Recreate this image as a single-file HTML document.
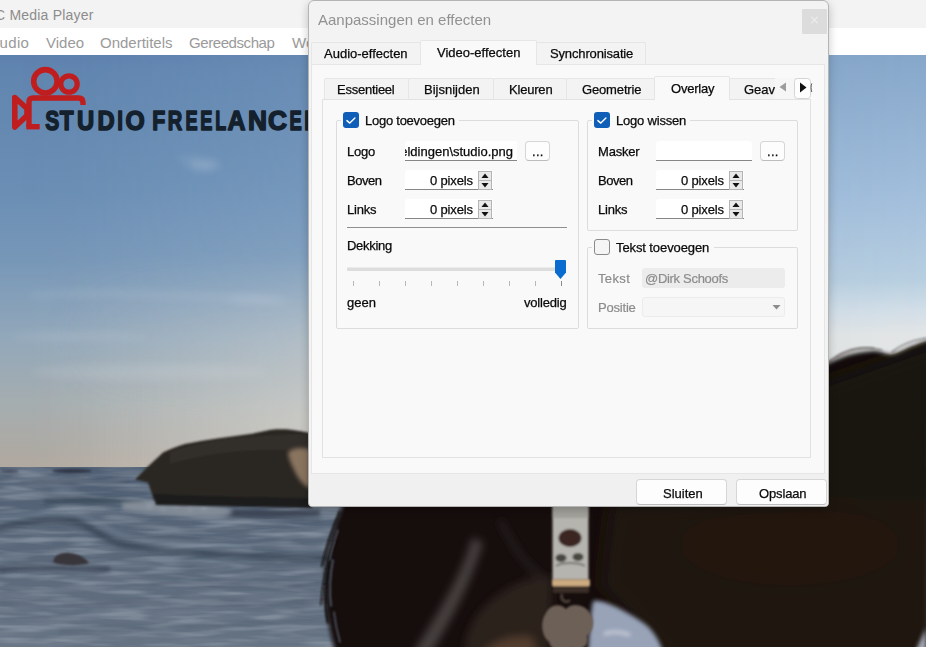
<!DOCTYPE html>
<html lang="nl">
<head>
<meta charset="utf-8">
<title>Aanpassingen en effecten</title>
<style>
*{box-sizing:border-box;margin:0;padding:0}
html,body{width:926px;height:647px;overflow:hidden;background:#fff}
body{position:relative;font-family:"Liberation Sans",sans-serif;font-size:13px;color:#111}
.abs{position:absolute}
#titlebar{left:0;top:0;width:926px;height:28px;background:#f3f3f3}
#titlebar span{position:absolute;left:-22.500px;top:7px;font-size:14px;letter-spacing:0.2px;color:#8c8c8c;white-space:nowrap;line-height:17px}
#menubar{left:0;top:28px;width:926px;height:27px;background:#fff}
#menubar span{position:absolute;top:6px;font-size:15px;color:#9a9a9a;white-space:nowrap;line-height:17px}
#video{left:0;top:55px;width:926px;height:592px;overflow:hidden;background:#7fa3cc}
#video svg{position:absolute;left:0;top:0}
/* dialog */
#dlg{left:308px;top:0px;width:521px;height:507px;background:#f3f3f3;border:1px solid #b4b4b4;border-radius:6px 6px 4px 4px;box-shadow:0 3px 10px rgba(0,0,0,.22);overflow:hidden}
#dlg .t{position:absolute;white-space:nowrap;font-size:13px;color:#0a0a0a;line-height:16px;margin-top:1px;-webkit-text-stroke:0.25px #0a0a0a}
#dtitle{font-size:15px !important;color:#919191 !important;margin-top:0 !important;-webkit-text-stroke:0 !important}
#close{background:#dcdcdc;border-radius:1px}
.tab{position:absolute;background:#f3f3f3;border:1px solid #e6e6e6;border-bottom:none;border-radius:2px 2px 0 0;text-align:center;white-space:nowrap;font-size:13px}
.tab.sel{background:#f9f9f9}
#pane1{background:#f9f9f9;border:1px solid #e6e6e6}
#w{left:-309px;top:-1px;width:926px;height:647px}
#dlg .t.dis{color:#8c8c8c;-webkit-text-stroke:0.2px #8c8c8c}
#pane2{background:#f9f9f9;border:1px solid #e2e2e2}
.grp{position:absolute;border:1px solid #dcdcdc;border-radius:2px}
.cb{position:absolute;width:15px;height:15px;border-radius:3px}
.cb.on{background:#0f5fb8}
.cb.off{background:#f5f5f5;border:1px solid #8a8a8a}
.inp{position:absolute;background:#fff;border-bottom:1px solid #868686;border-radius:3px 3px 0 0;height:21px}
.btn{position:absolute;background:#fdfdfd;border:1px solid #d6d6d6;border-bottom-color:#bdbdbd;border-radius:4px;text-align:center;font-size:13px}
</style>
</head>
<body>
<div id="titlebar" class="abs"><span>VLC Media Player</span></div>
<div id="menubar" class="abs">
<span style="left:-11px;letter-spacing:0.4px">Audio</span><span style="left:46px">Video</span><span style="left:100px">Ondertitels</span><span style="left:189px;letter-spacing:-0.42px">Gereedschap</span><span style="left:292px">Weergave</span>
</div>
<div id="video" class="abs">
<svg width="926" height="592" viewBox="0 55 926 592">
<defs>
<linearGradient id="sky" x1="0" y1="55" x2="0" y2="468" gradientUnits="userSpaceOnUse">
<stop offset="0" stop-color="#5d81ad"/>
<stop offset="0.036" stop-color="#6085af"/>
<stop offset="0.327" stop-color="#6a8eb4"/>
<stop offset="0.496" stop-color="#7797b8"/>
<stop offset="0.69" stop-color="#93a8ba"/>
<stop offset="0.847" stop-color="#a5adaf"/>
<stop offset="0.969" stop-color="#aea9a2"/>
<stop offset="1" stop-color="#b1aaa1"/>
</linearGradient>
<linearGradient id="skyR" x1="0" y1="55" x2="0" y2="468" gradientUnits="userSpaceOnUse">
<stop offset="0" stop-color="#86a7ca"/>
<stop offset="0.036" stop-color="#8aaacc"/>
<stop offset="0.35" stop-color="#a3bfdc"/>
<stop offset="0.545" stop-color="#b8cfe0"/>
<stop offset="0.617" stop-color="#d2dee8"/>
<stop offset="0.678" stop-color="#e3e6e6"/>
<stop offset="1" stop-color="#e8e6e2"/>
</linearGradient>
<linearGradient id="skym" x1="0" y1="0" x2="926" y2="0" gradientUnits="userSpaceOnUse">
<stop offset="0" stop-color="#fff" stop-opacity="0"/>
<stop offset="0.08" stop-color="#fff" stop-opacity="0.02"/>
<stop offset="0.33" stop-color="#fff" stop-opacity="0.2"/>
<stop offset="0.9" stop-color="#fff" stop-opacity="0.95"/>
<stop offset="1" stop-color="#fff" stop-opacity="1"/>
</linearGradient>
<linearGradient id="hglow" x1="40" y1="0" x2="330" y2="0" gradientUnits="userSpaceOnUse">
<stop offset="0" stop-color="#e9e4da" stop-opacity="0"/>
<stop offset="1" stop-color="#e9e4da" stop-opacity="0.42"/>
</linearGradient>
<linearGradient id="vm" x1="0" y1="250" x2="0" y2="420" gradientUnits="userSpaceOnUse">
<stop offset="0" stop-color="#fff" stop-opacity="0"/>
<stop offset="1" stop-color="#fff" stop-opacity="1"/>
</linearGradient>
<mask id="vmask" maskUnits="userSpaceOnUse" x="0" y="55" width="926" height="414"><rect x="0" y="55" width="926" height="414" fill="url(#vm)"/></mask>
<mask id="skymask" maskUnits="userSpaceOnUse" x="0" y="55" width="926" height="414"><rect x="0" y="55" width="926" height="414" fill="url(#skym)"/></mask>
<linearGradient id="sea" x1="0" y1="467" x2="0" y2="647" gradientUnits="userSpaceOnUse">
<stop offset="0" stop-color="#536276"/>
<stop offset="0.12" stop-color="#526175"/>
<stop offset="0.5" stop-color="#5a687a"/>
<stop offset="1" stop-color="#667383"/>
</linearGradient>
<filter id="ripple" x="0" y="0" width="100%" height="100%">
<feTurbulence type="fractalNoise" baseFrequency="0.014 0.13" numOctaves="3" seed="7"/>
<feColorMatrix type="matrix" values="0 0 0 0 0.17  0 0 0 0 0.21  0 0 0 0 0.27  3.4 0 0 0 -1.38"/>
</filter>
<filter id="ripple2" x="0" y="0" width="100%" height="100%">
<feTurbulence type="fractalNoise" baseFrequency="0.02 0.16" numOctaves="2" seed="23"/>
<feColorMatrix type="matrix" values="0 0 0 0 0.55  0 0 0 0 0.61  0 0 0 0 0.67  0 3.2 0 0 -1.45"/>
</filter>
<clipPath id="dogclip"><path d="M930 340 C920 343 913 346 908 348 C900 352 895 354.500 890 354.500 C882 353 878 350.500 872 351 C860 352 850 354 844 356.500 C836 359.500 830 362 820 367 L820 500 L345 500 C336 520 327 548 325 575 C324 600 328 625 336 655 L926 655 Z"/></clipPath>
<filter id="b8u" filterUnits="userSpaceOnUse" x="300" y="280" width="720" height="460"><feGaussianBlur stdDeviation="10"/></filter>
<filter id="b4u" filterUnits="userSpaceOnUse" x="300" y="450" width="400" height="260"><feGaussianBlur stdDeviation="4"/></filter>
<filter id="b1" x="-20%" y="-20%" width="140%" height="140%"><feGaussianBlur stdDeviation="1"/></filter>
<filter id="b2" x="-20%" y="-20%" width="140%" height="140%"><feGaussianBlur stdDeviation="2.2"/></filter>
<filter id="b4" x="-30%" y="-30%" width="160%" height="160%"><feGaussianBlur stdDeviation="4"/></filter>
<filter id="b8" x="-50%" y="-50%" width="200%" height="200%"><feGaussianBlur stdDeviation="8"/></filter>
</defs>
<!-- sky -->
<rect x="0" y="55" width="926" height="414" fill="url(#sky)"/>
<rect x="0" y="55" width="926" height="414" fill="url(#skyR)" mask="url(#skymask)"/>
<rect x="0" y="55" width="340" height="414" fill="url(#hglow)" mask="url(#vmask)"/>
<!-- clouds -->
<g filter="url(#b4)" fill="#fff">
<ellipse cx="204" cy="165" rx="15" ry="5" opacity=".2"/>
<ellipse cx="188" cy="159" rx="12" ry="3" opacity=".1"/>
<path d="M30 293 C100 288 200 292 290 300 L290 303 C200 297 100 295 30 297 Z" opacity=".13"/>
<ellipse cx="255" cy="299" rx="28" ry="3.500" opacity=".12"/>
<ellipse cx="80" cy="336" rx="70" ry="4" opacity=".10"/>
<ellipse cx="150" cy="372" rx="120" ry="8" opacity=".10"/>
</g>
<!-- sea -->
<rect x="0" y="467" width="926" height="180" fill="url(#sea)"/>
<rect x="0" y="467" width="926" height="180" filter="url(#ripple)" opacity=".62"/>
<rect x="0" y="467" width="926" height="180" filter="url(#ripple2)" opacity=".26"/>
<g filter="url(#b1)">
<path d="M0 468.500 H330" stroke="#4a586c" stroke-width="1.500" fill="none"/>
<ellipse cx="72" cy="471" rx="20" ry="2.200" fill="#33384a"/>
<ellipse cx="10" cy="471.500" rx="9" ry="1.500" fill="#464c5c"/>
</g>
<!-- waves -->
<g filter="url(#b2)" fill="none" stroke-linecap="round">
<path d="M20 482 C60 480 90 483 130 481" stroke="#3f4c5f" stroke-width="2.500" opacity=".6"/>
<path d="M46 502 C80 499 110 500 142 504" stroke="#364354" stroke-width="5" opacity=".8"/>
<path d="M0 527 C25 522 50 519 72 521 C90 524 100 538 120 544 C150 551 200 553 250 556 S300 558 326 558" stroke="#2f3b4c" stroke-width="7" opacity=".62"/>
<path d="M0 519 C25 514 50 511 75 513 C95 517 105 530 125 536 C150 542 200 545 250 548" stroke="#8393a6" stroke-width="4" opacity=".4"/>
<path d="M0 570 C30 567 70 567 108 569" stroke="#323e4f" stroke-width="5" opacity=".8"/>
<path d="M110 540 C140 536 170 538 200 541" stroke="#3f4c5e" stroke-width="3" opacity=".5"/>
<path d="M150 585 C200 582 260 588 320 584" stroke="#475466" stroke-width="3" opacity=".5"/>
<path d="M0 603 C80 599 200 607 330 601" stroke="#4b5869" stroke-width="3" opacity=".45"/>
<path d="M60 631 C140 624 240 628 330 620" stroke="#485566" stroke-width="3" opacity=".5"/>
<path d="M230 515 C260 518 290 516 320 520" stroke="#3c4859" stroke-width="3" opacity=".6"/>
</g>
<g filter="url(#b2)">
<path d="M150 506 C200 508 260 511 320 510 L320 516 C260 518 200 516 150 513 Z" fill="#343c4a" opacity=".8"/>
<path d="M122 503 C150 498 190 500 228 508 C238 513 225 518 205 517 C175 516 145 513 122 510 Z" fill="#868f9b" opacity=".95"/>
<g fill="#b9c0ca"><circle cx="150" cy="506" r="1.200"/><circle cx="163" cy="509" r="1"/><circle cx="176" cy="505" r="1.200"/><circle cx="190" cy="510" r="1"/><circle cx="204" cy="508" r="1.200"/></g>
</g>
<path d="M53 562 C54 555 62 552 70 553 C78 554 86 558 89 563 C80 566 62 566 53 562 Z" fill="#39353a" filter="url(#b1)"/>
<!-- big rock -->
<g filter="url(#b1)">
<path d="M135 479.500 L148 466.500 L163 452.500 C170 449 178 446 185 444 C196 441.500 206 440 217 438.400 C228 437 239 435.500 250 434 C258 432.500 264 431 271 429.800 C278 429.200 285 429.200 291 429.700 C298 430.500 304 431.500 312 433.500 L312 506 L158 503 C154 501 153 498 152.400 495.600 L148 482.600 Z" fill="#2a2622"/>
<path d="M170 452 C200 441 250 434 312 434 L312 452 C260 447 210 452 170 464 Z" fill="#3b3630" opacity=".5"/>
<path d="M153 494 C200 496 260 498 312 498 L312 508 L156 505 Z" fill="#1b1a1c"/>
</g>
<path d="M288 452 C294 447 304 447 310 450 L310 488 C303 486 298 478 294 470 C290 462 288 456 288 452 Z" fill="#9a826a" opacity=".85" filter="url(#b2)"/>
<!-- dog -->
<g filter="url(#b2)">
<path d="M930 340 C920 343 913 346 908 348 C900 352 895 354.500 890 354.500 C882 353 878 350.500 872 351 C860 352 850 354 844 356.500 C836 359.500 830 362 820 367 L820 500 L345 500 C336 520 327 548 325 575 C324 600 328 625 336 655 L926 655 Z" fill="#120e0d"/>
</g>
<g clip-path="url(#dogclip)"><g filter="url(#b8u)">
<path d="M610 500 L970 500 L970 690 L680 690 C655 640 625 615 600 585 Z" fill="#21170f" opacity=".7"/>
<ellipse cx="790" cy="545" rx="110" ry="40" fill="#2a1d15" opacity=".6"/>
<path d="M800 390 L970 330 L970 500 L800 500 Z" fill="#1c1511" opacity=".8"/>
</g></g>
<g filter="url(#b4u)">
<path d="M465 655 C462 630 480 605 505 590 C522 580 540 574 552 576 L552 655 Z" fill="#2b211b" opacity=".95"/>
<path d="M478 660 C488 642 510 634 532 637 L540 660 Z" fill="#5a4434" opacity=".85"/>
<path d="M472 538 C462 575 440 610 412 655 L430 655 C454 615 472 580 483 542 Z" fill="#55514f" opacity=".75"/>
<path d="M500 520 C510 540 520 560 540 575" stroke="#3a3634" stroke-width="5" fill="none" opacity=".5"/>
</g>
<!-- fur wisps -->
<g filter="url(#b1)" stroke="#15110f" fill="none" stroke-linecap="round">
<path d="M340 512 C332 530 326 548 322 566" stroke-width="2"/>
<path d="M332 560 C326 580 324 600 328 622" stroke-width="2.500"/>
<path d="M336 540 C328 560 322 585 321 605" stroke-width="1.500"/>
<path d="M829 362 C840 352 856 346 874 348" stroke-width="1.200" opacity=".55"/>
<path d="M836 358 C850 349 866 346 882 350" stroke-width="1" opacity=".5"/>
<path d="M892 352 C902 344 914 340 926 338" stroke-width="1.200" opacity=".55"/>
</g>
<g filter="url(#b1)" stroke="#6d7b8e" fill="none" stroke-linecap="round" opacity=".8">
<path d="M333 560 C330 575 329 590 331 606" stroke-width="1.600"/>
<path d="M338 530 C334 542 331 552 330 560" stroke-width="1.300"/>
<path d="M334 612 C335 622 337 632 340 642" stroke-width="1.400"/>
</g>
<!-- water under dog -->
<g filter="url(#b2)">
<path d="M593 601 C603 599 625 610 645 624 C655 632 660 642 664 655 L588 655 C589 635 590 615 593 601 Z" fill="#98a3b8"/>
<path d="M604 634 C612 631 622 632 630 635" stroke="#c8cdd8" stroke-width="3" fill="none"/>
<path d="M914 655 L926 628 L926 655 Z" fill="#a9afbc"/>
</g>
<!-- collar -->
<g filter="url(#b1)">
<rect x="552.500" y="498" width="36" height="81.500" fill="#b5b4ae"/>
<rect x="552.500" y="498" width="36" height="20" fill="#a3a29c"/>
<ellipse cx="570" cy="538" rx="11.500" ry="9" fill="#3a2521"/>
<ellipse cx="561" cy="558" rx="5.500" ry="4" fill="#48463f"/>
<ellipse cx="578" cy="557" rx="5.500" ry="4" fill="#48463f"/>
<path d="M556 566 C562 562 578 562 585 566" stroke="#77756e" stroke-width="2" fill="none"/>
<rect x="552" y="579.500" width="38" height="6.500" fill="#cdab80"/>
<rect x="553" y="586" width="36" height="7" fill="#3b2e26"/>
<path d="M562 594 C560 600 566 604 570 600" stroke="#4a4038" stroke-width="3" fill="none"/>
<path d="M546 613 C550 604 561 603 566 609 C572 602 585 605 590 613 C596 621 593 632 587 636 C590 645 582 652 572 648 C564 654 551 651 549 642 C541 636 540 621 546 613 Z" fill="#6d6157"/>
</g>
<!-- logo -->
<g id="logo">
<g fill="none" stroke="#c01d1e" stroke-linejoin="round">
<circle cx="45.400" cy="81.300" r="11.700" stroke-width="5.600"/>
<circle cx="69" cy="84" r="8.200" stroke-width="5.200"/>
<path d="M29 126.700 V102 Q29 98 33 98 H78.500 Q83 98 83 102.500 V105" stroke-width="5.400"/>
<path d="M26.300 126.700 H39.700" stroke-width="5.400"/>
<path d="M14.800 97.500 L27 108.500 V115.500 L14.800 127 Z" stroke-width="5.600"/>
</g>
<g font-family="'Liberation Sans',sans-serif" font-weight="700" font-size="28.200" fill="#14212d" stroke="#14212d" stroke-width="1.600" stroke-linejoin="round">
<text x="45.25" y="130" textLength="14.00" lengthAdjust="spacingAndGlyphs">S</text>
<text x="59.78" y="130" textLength="13.85" lengthAdjust="spacingAndGlyphs">T</text>
<text x="76.90" y="130" textLength="17.20" lengthAdjust="spacingAndGlyphs">U</text>
<text x="97.53" y="130" textLength="17.15" lengthAdjust="spacingAndGlyphs">D</text>
<text x="117.13" y="130" textLength="5.74" lengthAdjust="spacingAndGlyphs">I</text>
<text x="125.51" y="130" textLength="19.23" lengthAdjust="spacingAndGlyphs">O</text>
<text x="152.31" y="130" textLength="13.04" lengthAdjust="spacingAndGlyphs">F</text>
<text x="167.85" y="130" textLength="14.49" lengthAdjust="spacingAndGlyphs">R</text>
<text x="185.41" y="130" textLength="12.16" lengthAdjust="spacingAndGlyphs">E</text>
<text x="200.31" y="130" textLength="12.16" lengthAdjust="spacingAndGlyphs">E</text>
<text x="215.22" y="130" textLength="10.95" lengthAdjust="spacingAndGlyphs">L</text>
<text x="227.58" y="130" textLength="18.01" lengthAdjust="spacingAndGlyphs">A</text>
<text x="247.95" y="130" textLength="18.98" lengthAdjust="spacingAndGlyphs">N</text>
<text x="268.01" y="130" textLength="19.00" lengthAdjust="spacingAndGlyphs">C</text>
<text x="289.40" y="130" textLength="12.27" lengthAdjust="spacingAndGlyphs">E</text>
<text x="304.13" y="130" textLength="14.89" lengthAdjust="spacingAndGlyphs">R</text>
</g>
</g>
</svg>
</div>

<div id="dlg" class="abs">
<div id="w" class="abs">
<div id="dtitle" class="t" style="left:318px;top:12px">Aanpassingen en effecten</div>
<div id="close" class="abs" style="left:802px;top:9px;width:25px;height:25px"><svg width="25" height="25" viewBox="0 0 25 25"><path d="M9.2 7.7 L15.8 14.3 M15.8 7.7 L9.2 14.3" stroke="#ececec" stroke-width="1.2" fill="none"/></svg></div>
<div id="botbar" class="abs" style="left:310px;top:473px;width:518px;height:34px;background:#f0f0f0"></div>
<div id="pane1" class="abs" style="left:311px;top:64px;width:514px;height:410px"></div>
<!-- tab row 1 -->
<div class="tab" style="left:311px;top:42px;width:110px;height:22px"></div>
<div class="tab" style="left:536px;top:42px;width:110px;height:22px"></div>
<div class="tab sel" style="left:420px;top:40px;width:117px;height:25px"></div>
<div class="t" style="left:324px;top:45px">Audio-effecten</div>
<div class="t" style="left:437px;top:44px">Video-effecten</div>
<div class="t" style="left:550px;top:45px;letter-spacing:-0.15px">Synchronisatie</div>
<!-- tab row 2 -->
<div id="pane2" class="abs" style="left:322px;top:99px;width:489px;height:359px"></div>
<div class="tab" style="left:324px;top:78px;width:85px;height:21px"></div>
<div class="tab" style="left:408px;top:78px;width:86px;height:21px"></div>
<div class="tab" style="left:493px;top:78px;width:74px;height:21px"></div>
<div class="tab" style="left:566px;top:78px;width:89px;height:21px"></div>
<div class="tab" style="left:729px;top:78px;width:70px;height:21px"></div>
<div class="tab sel" style="left:654px;top:76px;width:76px;height:24px"></div>
<div class="t" style="left:337px;top:81px;letter-spacing:-0.25px">Essentieel</div>
<div class="t" style="left:424px;top:81px">Bijsnijden</div>
<div class="t" style="left:509px;top:81px;letter-spacing:-0.2px">Kleuren</div>
<div class="t" style="left:582px;top:81px;letter-spacing:-0.15px">Geometrie</div>
<div class="t" style="left:671px;top:80px;letter-spacing:-0.2px">Overlay</div>
<div class="t" style="left:744px;top:81px;width:31px;overflow:hidden">Geavanceerd</div>
<div class="abs" style="left:775px;top:78px;width:20px;height:21px;background:#f6f6f6"></div>
<svg class="abs" style="left:775px;top:78px" width="40" height="22" viewBox="0 0 40 22"><path d="M11 4.5 L11 13.5 L4.5 9 Z" fill="#9c9c9c"/><rect x="19.500" y="0.500" width="16" height="20" rx="3" fill="#fdfdfd" stroke="#d4d4d4"/><path d="M25 4.500 L25 14.500 L31.500 9.500 Z" fill="#111"/><path d="M36.800 5.500 C35.800 8 35.800 11 36.800 14" stroke="#555" stroke-width="1" fill="none"/></svg>

<!-- group: Logo toevoegen -->
<div class="grp" style="left:336px;top:120px;width:243px;height:209px"></div>
<div class="abs" style="left:341px;top:112px;width:118px;height:17px;background:#f9f9f9"></div>
<div class="cb on" style="left:343px;top:112px;width:16px;height:16px"><svg width="16" height="16" viewBox="0 0 16 16"><path d="M3.900 8.600 L6.800 11.100 L11.900 6" stroke="#fff" stroke-width="1.400" fill="none" stroke-linecap="round" stroke-linejoin="round"/></svg></div>
<div class="t" style="left:365px;top:112px;letter-spacing:-0.25px">Logo toevoegen</div>
<div class="t" style="left:347px;top:143px;letter-spacing:-0.25px">Logo</div>
<div class="inp" style="left:405px;top:141px;width:112px;height:20px;overflow:hidden"><div class="t" style="right:4px;top:2px">C:\Users\dirk\Pictures\Afbeeldingen\studio.png</div></div>
<div class="btn" style="left:525px;top:141px;width:25px;height:20px"><div class="t" style="left:6px;top:1px;letter-spacing:0.3px">...</div></div>
<div class="t" style="left:347px;top:172px;letter-spacing:-0.45px">Boven</div>
<div class="inp" style="left:405px;top:170px;width:88px;height:20px"></div>
<div class="t" style="left:430px;top:172px;letter-spacing:-0.15px">0 pixels</div>
<div class="t" style="left:347px;top:201px;letter-spacing:-0.2px">Links</div>
<div class="inp" style="left:405px;top:199px;width:88px;height:20px"></div>
<div class="t" style="left:430px;top:201px;letter-spacing:-0.15px">0 pixels</div>
<div class="abs" style="left:347px;top:227px;width:220px;height:1px;background:#8f8f8f"></div>
<div class="t" style="left:347px;top:237px;letter-spacing:-0.3px">Dekking</div>
<div class="abs" style="left:347px;top:267px;width:219px;height:4px;background:#dddddd;border-top:1px solid #ebebeb;border-radius:1px"></div>
<div class="t" style="left:347px;top:294px">geen</div>
<div class="t" style="left:524px;top:294px;letter-spacing:-0.2px">volledig</div>

<div class="abs" style="left:353px;top:281px;width:1px;height:5px;background:#b8b8b8"></div><div class="abs" style="left:379px;top:281px;width:1px;height:5px;background:#b8b8b8"></div><div class="abs" style="left:405px;top:281px;width:1px;height:5px;background:#b8b8b8"></div><div class="abs" style="left:431px;top:281px;width:1px;height:5px;background:#b8b8b8"></div><div class="abs" style="left:457px;top:281px;width:1px;height:5px;background:#b8b8b8"></div><div class="abs" style="left:483px;top:281px;width:1px;height:5px;background:#b8b8b8"></div><div class="abs" style="left:509px;top:281px;width:1px;height:5px;background:#b8b8b8"></div><div class="abs" style="left:535px;top:281px;width:1px;height:5px;background:#b8b8b8"></div><div class="abs" style="left:561px;top:281px;width:1px;height:5px;background:#8a8a8a"></div>
<svg class="abs" style="left:555px;top:260px" width="11" height="19" viewBox="0 0 11 19"><path d="M1 0 H10 Q11 0 11 1 V12.500 L5.500 19 L0 12.500 V1 Q0 0 1 0 Z" fill="#0a6ccf"/></svg>
<svg class="abs" style="left:478px;top:171px" width="14" height="19" viewBox="0 0 14 19"><rect x="0.500" y="0.500" width="13" height="9" fill="#e9e9e9" stroke="#b4b4b4"/><rect x="0.500" y="9.500" width="13" height="9" fill="#e9e9e9" stroke="#b4b4b4"/><path d="M7 2.500 L10.500 7 L3.500 7 Z" fill="#111"/><path d="M3.500 12 L10.500 12 L7 16.500 Z" fill="#111"/></svg>
<svg class="abs" style="left:478px;top:200px" width="14" height="19" viewBox="0 0 14 19"><rect x="0.500" y="0.500" width="13" height="9" fill="#e9e9e9" stroke="#b4b4b4"/><rect x="0.500" y="9.500" width="13" height="9" fill="#e9e9e9" stroke="#b4b4b4"/><path d="M7 2.500 L10.500 7 L3.500 7 Z" fill="#111"/><path d="M3.500 12 L10.500 12 L7 16.500 Z" fill="#111"/></svg>
<!-- group: Logo wissen -->
<div class="grp" style="left:587px;top:120px;width:211px;height:111px"></div>
<div class="abs" style="left:592px;top:112px;width:98px;height:17px;background:#f9f9f9"></div>
<div class="cb on" style="left:594px;top:112px;width:16px;height:16px"><svg width="16" height="16" viewBox="0 0 16 16"><path d="M3.900 8.600 L6.800 11.100 L11.900 6" stroke="#fff" stroke-width="1.400" fill="none" stroke-linecap="round" stroke-linejoin="round"/></svg></div>
<div class="t" style="left:616px;top:112px;letter-spacing:-0.2px">Logo wissen</div>
<div class="t" style="left:598px;top:143px;letter-spacing:-0.2px">Masker</div>
<div class="inp" style="left:656px;top:141px;width:96px;height:20px"></div>
<div class="btn" style="left:760px;top:141px;width:25px;height:20px"><div class="t" style="left:6px;top:1px;letter-spacing:0.3px">...</div></div>
<div class="t" style="left:598px;top:172px;letter-spacing:-0.45px">Boven</div>
<div class="inp" style="left:656px;top:170px;width:88px;height:20px"></div>
<div class="t" style="left:681px;top:172px;letter-spacing:-0.15px">0 pixels</div>
<div class="t" style="left:598px;top:201px;letter-spacing:-0.2px">Links</div>
<div class="inp" style="left:656px;top:199px;width:88px;height:20px"></div>
<div class="t" style="left:681px;top:201px;letter-spacing:-0.15px">0 pixels</div>

<!-- group: Tekst toevoegen -->
<div class="grp" style="left:587px;top:247px;width:211px;height:82px"></div>
<div class="abs" style="left:592px;top:239px;width:122px;height:17px;background:#f9f9f9"></div>
<div class="cb off" style="left:594px;top:239px;width:16px;height:16px"></div>
<div class="t" style="left:616px;top:239px;letter-spacing:-0.1px">Tekst toevoegen</div>
<div class="t dis" style="left:598px;top:270px;letter-spacing:0.35px">Tekst</div>
<div class="abs" style="left:642px;top:268px;width:143px;height:20px;background:#ececec;border-radius:3px"></div>
<div class="t dis" style="left:645px;top:270px;letter-spacing:-0.3px">@Dirk Schoofs</div>
<div class="t dis" style="left:598px;top:299px;letter-spacing:-0.2px">Positie</div>
<div class="abs" style="left:642px;top:297px;width:143px;height:20px;background:#f6f6f6;border:1px solid #ececec;border-radius:3px"></div>
<svg class="abs" style="left:772px;top:304px" width="9" height="6" viewBox="0 0 9 6"><path d="M0.500 1 L8.500 1 L4.500 5.500 Z" fill="#8c8c8c"/></svg>

<svg class="abs" style="left:729px;top:171px" width="14" height="19" viewBox="0 0 14 19"><rect x="0.500" y="0.500" width="13" height="9" fill="#e9e9e9" stroke="#b4b4b4"/><rect x="0.500" y="9.500" width="13" height="9" fill="#e9e9e9" stroke="#b4b4b4"/><path d="M7 2.500 L10.500 7 L3.500 7 Z" fill="#111"/><path d="M3.500 12 L10.500 12 L7 16.500 Z" fill="#111"/></svg>
<svg class="abs" style="left:729px;top:200px" width="14" height="19" viewBox="0 0 14 19"><rect x="0.500" y="0.500" width="13" height="9" fill="#e9e9e9" stroke="#b4b4b4"/><rect x="0.500" y="9.500" width="13" height="9" fill="#e9e9e9" stroke="#b4b4b4"/><path d="M7 2.500 L10.500 7 L3.500 7 Z" fill="#111"/><path d="M3.500 12 L10.500 12 L7 16.500 Z" fill="#111"/></svg>
<!-- buttons -->
<div class="btn" style="left:636px;top:479px;width:91px;height:26px"><div class="t" style="left:26px;top:5px">Sluiten</div></div>
<div class="btn" style="left:736px;top:479px;width:91px;height:26px"><div class="t" style="left:22px;top:5px;letter-spacing:-0.15px">Opslaan</div></div>
</div>
</div>
</body>
</html>
